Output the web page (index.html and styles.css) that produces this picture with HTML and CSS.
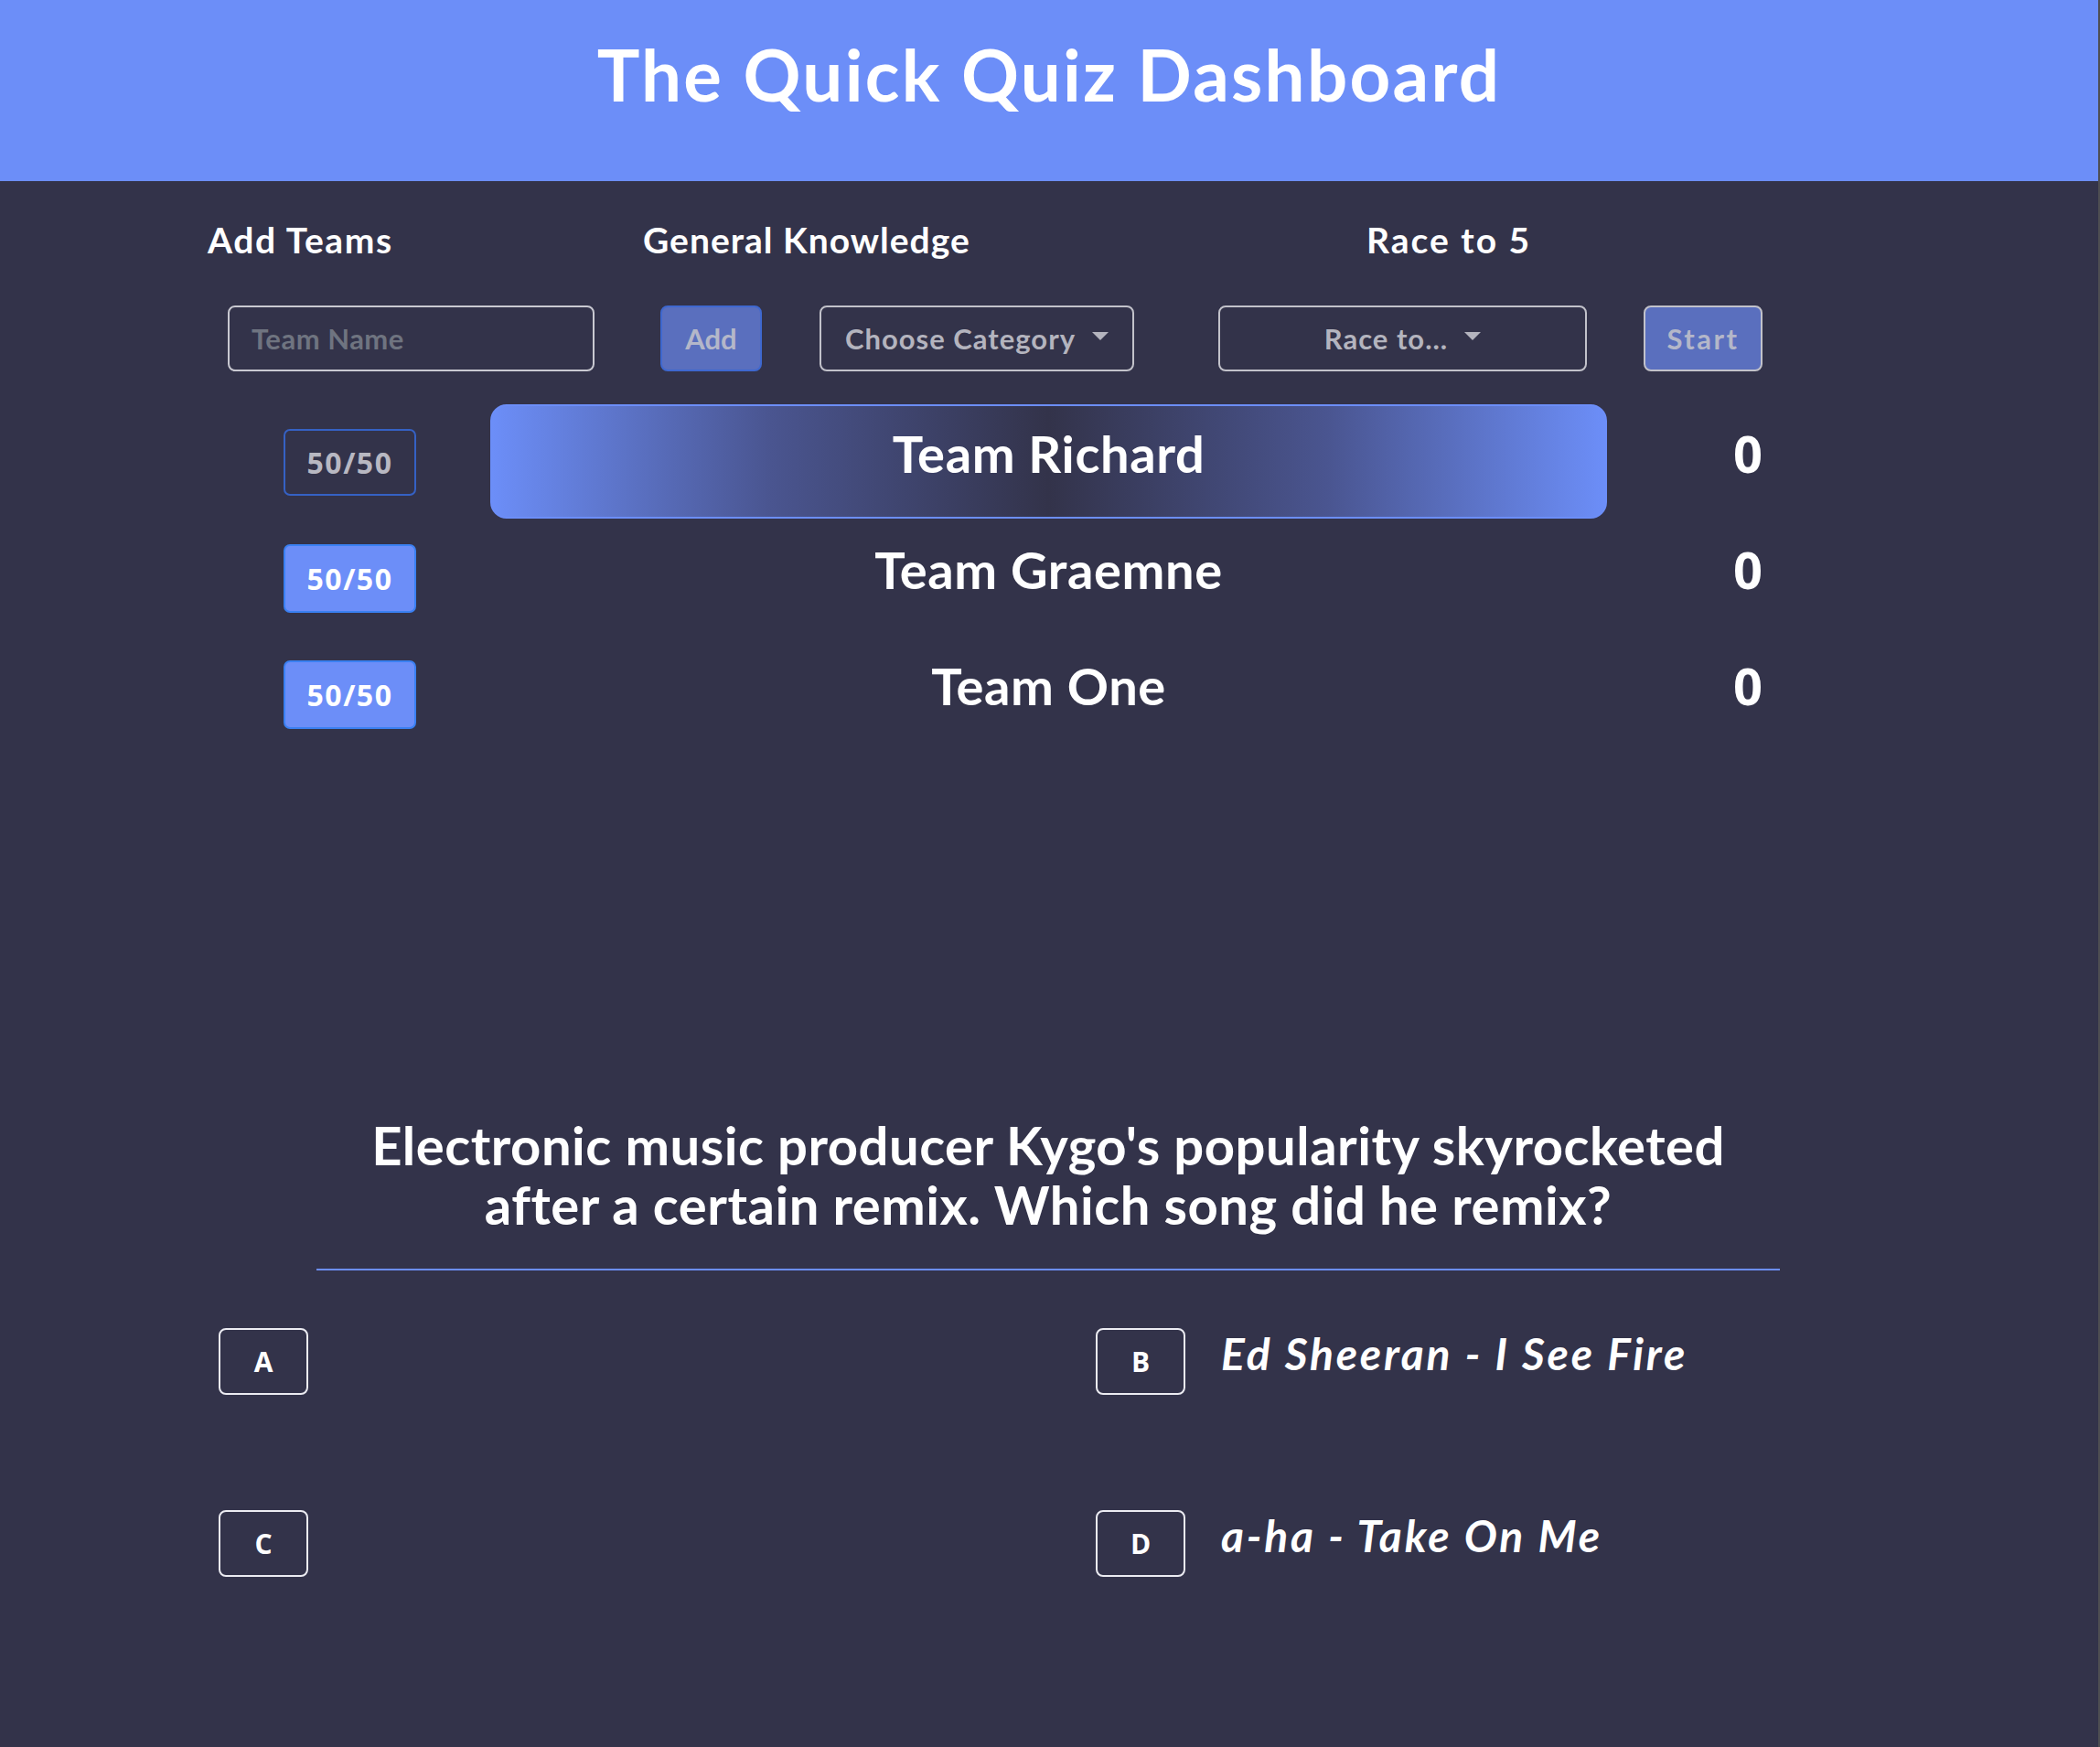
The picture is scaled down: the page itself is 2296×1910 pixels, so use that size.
FILE: index.html
```html
<!DOCTYPE html>
<html lang="en">
<head>
<meta charset="utf-8">
<title>The Quick Quiz Dashboard</title>
<link rel="stylesheet" href="styles.css">
</head>
<body>
<div class="page">
  <header class="topbar">
    <h1 class="title">The Quick Quiz Dashboard</h1>
  </header>

  <section class="setup">
    <div class="labels">
      <span class="label label-teams">Add Teams</span>
      <span class="label label-cat">General Knowledge</span>
      <span class="label label-race">Race to 5</span>
    </div>
    <div class="controls">
      <div class="input-box"><span class="placeholder">Team Name</span></div>
      <button class="btn btn-add">Add</button>
      <div class="dropdown dd-cat"><span>Choose Category</span><span class="caret"></span></div>
      <div class="dropdown dd-race"><span>Race to...</span><span class="caret"></span></div>
      <button class="btn btn-start">Start</button>
    </div>
  </section>

  <section class="teams">
    <div class="team-row">
      <button class="fifty fifty-used">50/50</button>
      <div class="team-name active">Team Richard</div>
      <div class="score">0</div>
    </div>
    <div class="team-row">
      <button class="fifty">50/50</button>
      <div class="team-name">Team Graemne</div>
      <div class="score">0</div>
    </div>
    <div class="team-row">
      <button class="fifty">50/50</button>
      <div class="team-name">Team One</div>
      <div class="score">0</div>
    </div>
  </section>

  <section class="question">
    <p class="question-text">Electronic music producer Kygo's popularity skyrocketed<br>after a certain remix. Which song did he remix?</p>
  </section>

  <section class="answers">
    <div class="answer"><div class="letter">A</div><div class="answer-text"></div></div>
    <div class="answer"><div class="letter">B</div><div class="answer-text">Ed Sheeran - I See Fire</div></div>
    <div class="answer"><div class="letter">C</div><div class="answer-text"></div></div>
    <div class="answer"><div class="letter">D</div><div class="answer-text">a-ha - Take On Me</div></div>
  </section>
</div>
</body>
</html>
```

FILE: styles.css
```css
* { box-sizing: border-box; }

html, body {
  margin: 0;
  padding: 0;
  background: #33334a;
}

.page {
  min-height: 1910px;
  background: #33334a;
  border-right: 2px solid #4e4e52;
  font-family: "Lato", "Liberation Sans", sans-serif;
  color: #ffffff;
  overflow: hidden;
}

.topbar {
  height: 198px;
  background: #6c8ef8;
  display: flex;
  align-items: center;
  justify-content: center;
  padding-bottom: 36px;
}

.title {
  margin: 0;
  font-size: 78px;
  font-weight: 700;
  line-height: 1;
  color: #ffffff;
  letter-spacing: 2.3px;
}

/* setup */
.setup { margin-top: 44px; }

.labels {
  display: flex;
  height: 40px;
  align-items: center;
  padding-left: 227px;
}

.label {
  font-size: 39px;
  font-weight: 700;
  line-height: 40px;
  white-space: nowrap;
  letter-spacing: 1px;
}
.label-teams { width: 476px; letter-spacing: 1.6px; }
.label-cat { width: 791px; }
.label-race { letter-spacing: 2px; }

.controls {
  display: flex;
  margin-top: 52px;
  padding-left: 249px;
  height: 72px;
}

.input-box {
  width: 401px;
  height: 72px;
  border: 2px solid #c9c9d1;
  border-radius: 8px;
  display: flex;
  align-items: center;
  padding-left: 24px;
}
.placeholder {
  font-size: 31px;
  font-weight: 700;
  color: #6f7480;
  letter-spacing: 0.5px;
}

.btn {
  height: 72px;
  border-radius: 8px;
  font-family: "Lato", "Liberation Sans", sans-serif;
  font-size: 31px;
  font-weight: 700;
  color: #b4b7c9;
  background: #5a6fbe;
  padding: 0;
  display: flex;
  align-items: center;
  justify-content: center;
}
.btn-add {
  width: 111px;
  margin-left: 72px;
  border: 2px solid #3f68cf;
}
.btn-start {
  width: 130px;
  margin-left: 62px;
  border: 2px solid #c2c2ca;
  letter-spacing: 2.5px;
}

.dropdown {
  height: 72px;
  border: 2px solid #c2c2ca;
  border-radius: 8px;
  display: flex;
  align-items: center;
  justify-content: center;
  gap: 18px;
  font-size: 31px;
  font-weight: 700;
  color: #b4b4be;
  letter-spacing: 1px;
}
.dd-cat { width: 344px; margin-left: 63px; }
.dd-race { width: 403px; margin-left: 92px; }

.caret {
  width: 0;
  height: 0;
  border-left: 9px solid transparent;
  border-right: 9px solid transparent;
  border-top: 9px solid #b4b4be;
  margin-top: -6px;
}

/* teams */
.teams {
  margin-top: 36px;
  display: flex;
  flex-direction: column;
  gap: 2px;
}

.team-row {
  display: flex;
  align-items: center;
  height: 125px;
  padding-left: 310px;
}

.fifty {
  width: 145px;
  height: 75px;
  border-radius: 7px;
  border: 2px solid #3a80f2;
  background: #6c8ef8;
  color: #ffffff;
  font-family: "Open Sans", "Liberation Sans", sans-serif;
  font-size: 32px;
  font-weight: 700;
  letter-spacing: 1.5px;
  padding: 0;
  margin-top: 1px;
}
.fifty-used {
  background: transparent;
  border-color: #3561c4;
  color: #b8b8c2;
  height: 73px;
}

.team-name {
  width: 1221px;
  height: 125px;
  margin-left: 81px;
  display: flex;
  align-items: center;
  justify-content: center;
  font-size: 56px;
  font-weight: 700;
  letter-spacing: 0.6px;
  padding-bottom: 18px;
  border-radius: 18px;
}
.team-name.active {
  border: 2px solid #6c8ef8;
  background: linear-gradient(to right, #6c8ef8 0%, #4a5590 25%, #33334a 50%, #4a5590 75%, #6c8ef8 100%);
}

.score {
  width: 170px;
  text-align: right;
  font-family: "Open Sans", "Liberation Sans", sans-serif;
  font-size: 56px;
  font-weight: 700;
  padding-bottom: 20px;
}

/* question */
.question {
  width: 1600px;
  margin: 398px 0 0 346px;
  border-bottom: 2px solid #6c8ef8;
  padding-bottom: 38px;
}

.question-text {
  margin: 0;
  text-align: center;
  font-size: 58px;
  font-weight: 700;
  line-height: 65px;
  letter-spacing: 0.5px;
}

/* answers */
.answers {
  display: grid;
  grid-template-columns: 959px 800px;
  row-gap: 126px;
  margin: 63px 0 0 239px;
}

.answer {
  display: flex;
  align-items: flex-start;
  height: 73px;
}

.letter {
  flex: none;
  width: 98px;
  height: 73px;
  border: 2px solid #ececf2;
  border-radius: 8px;
  display: flex;
  align-items: center;
  justify-content: center;
  font-family: "Open Sans", "Liberation Sans", sans-serif;
  font-size: 30px;
  font-weight: 700;
}

.answer-text {
  margin-left: 39px;
  margin-top: 2px;
  font-size: 48px;
  font-weight: 700;
  font-style: italic;
  line-height: 52px;
  letter-spacing: 2.8px;
  white-space: nowrap;
}
```
